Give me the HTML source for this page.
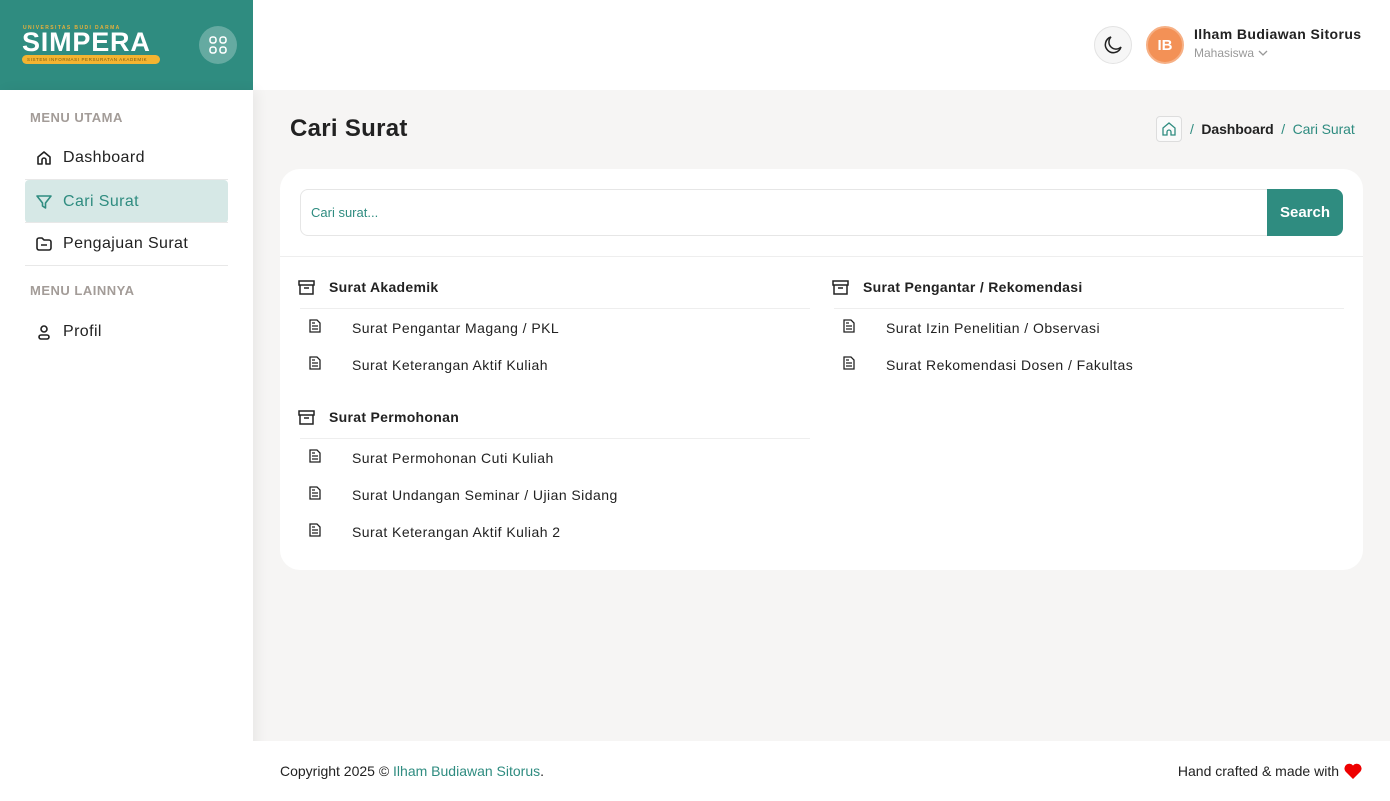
<!DOCTYPE html>
<html><head><meta charset="utf-8"><style>
*{box-sizing:border-box;margin:0;padding:0}
body{width:1390px;height:801px;overflow:hidden;font-family:"Liberation Sans",sans-serif;background:#f6f5f4;color:#222;position:relative}
.logo{position:absolute;left:0;top:0;width:253px;height:90px;background:#2f8c80}
.side{position:absolute;left:0;top:90px;width:253px;height:711px;background:#fff;box-shadow:4px 0 12px rgba(0,0,0,.06)}
.hdr{position:absolute;left:253px;top:0;right:0;height:90px;background:#fff}
.sec{position:absolute;left:30px;font-size:13px;font-weight:bold;color:#a39c98;letter-spacing:.5px}
.mi{position:absolute;left:25px;width:203px;height:43px;display:flex;align-items:center;padding-left:10px;font-size:16px;color:#222;gap:10px;letter-spacing:.4px}
.mi svg{width:18px;height:18px;fill:none;stroke:#222;stroke-width:1.6}
.act{background:#d6e8e6;color:#2f8c80;border-radius:4px}
.act svg{stroke:#2f8c80}
.hr{position:absolute;left:25px;width:203px;border-top:1px solid #e8e8e8}
.card{position:absolute;left:280px;top:169px;width:1083px;height:401px;background:#fff;border-radius:20px}
.inp{position:absolute;left:20px;top:20px;width:1043px;height:47px;border:1px solid #e6e6e6;border-radius:8px;font-size:13px;color:#2f8c80;padding:15px 10px}
.btn{position:absolute;right:20px;top:20px;width:76px;height:47px;background:#2f8c80;color:#fff;border-radius:0 8px 8px 0;font-weight:bold;font-size:15px;display:flex;align-items:center;justify-content:center}
.gh{position:absolute;font-size:14px;font-weight:bold;display:flex;align-items:center;gap:14px;height:20px;letter-spacing:.3px}
.gl{position:absolute;border-top:1px solid #eee}
.it{position:absolute;font-size:14px;color:#222;height:18px;display:flex;align-items:center;letter-spacing:.45px}
.it svg{position:absolute;left:-43px;top:0}
.foot{position:absolute;left:253px;top:741px;right:0;height:60px;background:#fff;font-size:14px;display:flex;align-items:center;justify-content:space-between;padding:0 27px}
</style></head><body>
<div class="logo">
 <div style="position:absolute;left:23px;top:25px;font-size:5px;color:#e8b03a;font-weight:bold;letter-spacing:1.4px">UNIVERSITAS BUDI DARMA</div>
 <div style="position:absolute;left:22px;top:27px;font-size:27px;color:#fff;font-weight:bold;letter-spacing:.8px">SIMPERA</div>
 <div style="position:absolute;left:22px;top:55px;width:138px;height:9px;background:#f4b431;border-radius:5px;font-size:4.5px;color:#7a5a10;padding:2px 5px;letter-spacing:.6px;white-space:nowrap;overflow:hidden">SISTEM INFORMASI PERSURATAN AKADEMIK</div>
 <div style="position:absolute;left:199px;top:26px;width:38px;height:38px;border-radius:50%;background:#65aaa1">
  <svg width="38" height="38" viewBox="0 0 38 38" fill="none" stroke="#fff" stroke-width="1.6"><rect x="11" y="11" width="6" height="6" rx="2.5"/><rect x="21" y="11" width="6" height="6" rx="2.5"/><rect x="11" y="21" width="6" height="6" rx="2.5"/><rect x="21" y="21" width="6" height="6" rx="2.5"/></svg>
 </div>
</div>
<div class="hdr">
 <div style="position:absolute;left:841px;top:26px;width:38px;height:38px;border-radius:50%;border:1px solid #e3e3e3;background:#f6f6f6">
  <svg width="36" height="36" viewBox="0 0 36 36" fill="none" stroke="#222" stroke-width="1.5"><path d="M16 10a8 8 0 1 0 10 10a7 7 0 0 1-10-10z"/></svg></div>
 <div style="position:absolute;left:893px;top:26px;width:38px;height:38px;border-radius:50%;background:#f39156;border:2px solid #f6b085;color:#fff;font-weight:bold;font-size:15px;display:flex;align-items:center;justify-content:center">IB</div>
 <div style="position:absolute;left:941px;top:26px;font-size:14px;font-weight:bold;color:#222;letter-spacing:.4px">Ilham Budiawan Sitorus</div>
 <div style="position:absolute;left:941px;top:46px;font-size:12px;color:#999">Mahasiswa <svg width="12" height="8" viewBox="0 0 12 8" fill="none" stroke="#999" stroke-width="1.3"><path d="M2 2l4 4 4-4"/></svg></div>
</div>
<div class="side">
 <div class="sec" style="top:20px">MENU UTAMA</div>
 <div class="mi" style="top:46px"><svg viewBox="0 0 18 18"><path d="M3 8l6-5 6 5v7h-4v-4a2 2 0 0 0-4 0v4H3z" stroke-linejoin="round"/></svg>Dashboard</div>
 <div class="hr" style="top:89px"></div>
 <div class="mi act" style="top:90px"><svg viewBox="0 0 18 18"><path d="M2 3h14l-5.5 7v5l-3-2v-3z" stroke-linejoin="round"/></svg>Cari Surat</div>
 <div class="hr" style="top:132px"></div>
 <div class="mi" style="top:132px"><svg viewBox="0 0 18 18"><path d="M2 5a2 2 0 0 1 2-2h3l2 2h5a2 2 0 0 1 2 2v6a2 2 0 0 1-2 2H4a2 2 0 0 1-2-2z M6 10h6"/></svg>Pengajuan Surat</div>
 <div class="hr" style="top:175px"></div>
 <div class="sec" style="top:193px">MENU LAINNYA</div>
 <div class="mi" style="top:220px"><svg viewBox="0 0 18 18"><circle cx="9" cy="6" r="3"/><rect x="4" y="12" width="10" height="4" rx="2"/></svg>Profil</div>
</div>
<div style="position:absolute;left:290px;top:115px;font-size:24px;font-weight:bold;color:#222;letter-spacing:.3px">Cari Surat</div>
<div style="position:absolute;left:1156px;top:116px;width:26px;height:26px;border:1px solid #ddd;border-radius:4px;background:#fafafa"><svg width="24" height="24" viewBox="0 0 24 24" fill="none" stroke="#2f8c80" stroke-width="1.3"><path d="M6 11l6-5 6 5v7h-4v-3a2 2 0 0 0-4 0v3H6z"/></svg></div>
<div style="position:absolute;left:1190px;top:121px;font-size:14px;letter-spacing:-.1px"><span style="color:#2f8c80">/</span>&nbsp; <b>Dashboard</b> &nbsp;<span style="color:#2f8c80">/&nbsp; Cari Surat</span></div>
<div class="card">
 <div class="inp">Cari surat...</div>
 <div class="btn">Search</div>
 <div class="gl" style="left:0;right:0;top:87px"></div>
 <div class="gh" style="left:18px;top:108px"><svg width="17" height="15" viewBox="0 0 17 15" fill="none" stroke="#222" stroke-width="1.5"><rect x="1" y="1" width="15" height="4"/><path d="M2 5v9h13V5M6 8h5"/></svg>Surat Akademik</div>
 <div class="gl" style="left:20px;width:510px;top:139px"></div>
 <div class="it" style="left:72px;top:150px"><svg width="12" height="14" viewBox="0 0 12 14" fill="none" stroke="#222" stroke-width="1.3"><path d="M1 1h7l3 3v9H1zM3 7h6M3 10h6M3 4h3"/></svg>Surat Pengantar Magang / PKL</div>
 <div class="it" style="left:72px;top:187px"><svg width="12" height="14" viewBox="0 0 12 14" fill="none" stroke="#222" stroke-width="1.3"><path d="M1 1h7l3 3v9H1zM3 7h6M3 10h6M3 4h3"/></svg>Surat Keterangan Aktif Kuliah</div>
 <div class="gh" style="left:18px;top:238px"><svg width="17" height="15" viewBox="0 0 17 15" fill="none" stroke="#222" stroke-width="1.5"><rect x="1" y="1" width="15" height="4"/><path d="M2 5v9h13V5M6 8h5"/></svg>Surat Permohonan</div>
 <div class="gl" style="left:20px;width:510px;top:269px"></div>
 <div class="it" style="left:72px;top:280px"><svg width="12" height="14" viewBox="0 0 12 14" fill="none" stroke="#222" stroke-width="1.3"><path d="M1 1h7l3 3v9H1zM3 7h6M3 10h6M3 4h3"/></svg>Surat Permohonan Cuti Kuliah</div>
 <div class="it" style="left:72px;top:317px"><svg width="12" height="14" viewBox="0 0 12 14" fill="none" stroke="#222" stroke-width="1.3"><path d="M1 1h7l3 3v9H1zM3 7h6M3 10h6M3 4h3"/></svg>Surat Undangan Seminar / Ujian Sidang</div>
 <div class="it" style="left:72px;top:354px"><svg width="12" height="14" viewBox="0 0 12 14" fill="none" stroke="#222" stroke-width="1.3"><path d="M1 1h7l3 3v9H1zM3 7h6M3 10h6M3 4h3"/></svg>Surat Keterangan Aktif Kuliah 2</div>
 <div class="gh" style="left:552px;top:108px"><svg width="17" height="15" viewBox="0 0 17 15" fill="none" stroke="#222" stroke-width="1.5"><rect x="1" y="1" width="15" height="4"/><path d="M2 5v9h13V5M6 8h5"/></svg>Surat Pengantar / Rekomendasi</div>
 <div class="gl" style="left:554px;width:510px;top:139px"></div>
 <div class="it" style="left:606px;top:150px"><svg width="12" height="14" viewBox="0 0 12 14" fill="none" stroke="#222" stroke-width="1.3"><path d="M1 1h7l3 3v9H1zM3 7h6M3 10h6M3 4h3"/></svg>Surat Izin Penelitian / Observasi</div>
 <div class="it" style="left:606px;top:187px"><svg width="12" height="14" viewBox="0 0 12 14" fill="none" stroke="#222" stroke-width="1.3"><path d="M1 1h7l3 3v9H1zM3 7h6M3 10h6M3 4h3"/></svg>Surat Rekomendasi Dosen / Fakultas</div>
</div>
<div class="foot"><div>Copyright 2025 © <span style="color:#2f8c80">Ilham Budiawan Sitorus</span>.</div><div style="display:flex;align-items:center;gap:4px">Hand crafted &amp; made with <svg width="20" height="18" viewBox="0 0 20 18"><path d="M10 17L2.5 9.5A4.5 4.5 0 0 1 10 3.5a4.5 4.5 0 0 1 7.5 6z" fill="#e00"/></svg></div></div>
</body></html>
